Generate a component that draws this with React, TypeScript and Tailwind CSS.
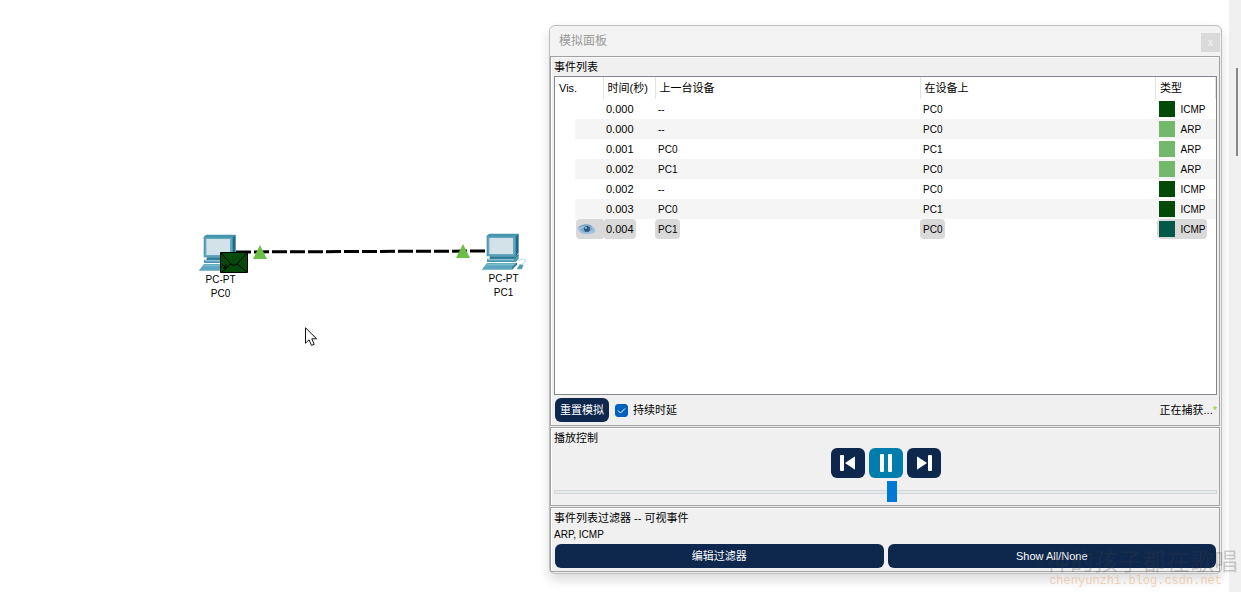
import { useState, type ReactNode } from 'react'

type Packet = {
  time: string
  last: string
  at: string
  type: 'ICMP' | 'ARP'
  active?: boolean
}

const packets: Packet[] = [
  { time: '0.000', last: '--', at: 'PC0', type: 'ICMP' },
  { time: '0.000', last: '--', at: 'PC0', type: 'ARP' },
  { time: '0.001', last: 'PC0', at: 'PC1', type: 'ARP' },
  { time: '0.002', last: 'PC1', at: 'PC0', type: 'ARP' },
  { time: '0.002', last: '--', at: 'PC0', type: 'ICMP' },
  { time: '0.003', last: 'PC0', at: 'PC1', type: 'ICMP' },
  { time: '0.004', last: 'PC1', at: 'PC0', type: 'ICMP', active: true },
]

function swatchColor(packet: Packet) {
  if (packet.active) return 'bg-[#045847]'
  return packet.type === 'ICMP' ? 'bg-[#034a08]' : 'bg-[#74b86b]'
}

function PcIcon() {
  return (
    <svg width="45" height="37" viewBox="124 40 135 111" aria-hidden="true">
      <path d="M141 48l8-6h88l-7 8v60h-89z" fill="#4594ae" />
      <path d="M229 50l8-8v56l-8 13z" fill="#1f6b87" />
      <path d="M144 51h82v57h-82z" fill="#62a7be" />
      <path d="M149 55h71v48h-71z" fill="#d3e1e9" />
      <path d="M150 110h80l7-9v8l-10 9h-77z" fill="#2d7a96" />
      <path d="M142 117h87l8-9v10l-9 9h-86z" fill="#4a96b0" />
      <path d="M144 118h80v4h-80z" fill="#8cc2d2" />
      <path d="M142 130h90l-15 20h-91z" fill="#5ca7bf" />
      <path d="M144 132h83l-4 5h-83z" fill="#7fbccd" />
      <path d="M217 143l15-15v7l-15 15z" fill="#2d7a96" />
      <path d="M231 149l9-15 12 2-6 13z" fill="#5799ae" />
      <path d="M236 122q14-7 20-1q3 6-8 12" fill="none" stroke="#bcd5dd" strokeWidth="3" />
    </svg>
  )
}

function LinkLight() {
  return (
    <svg width="14" height="14" viewBox="0 0 14 14" aria-hidden="true">
      <path d="M7 0l7 14H0z" fill="#6cbf45" />
    </svg>
  )
}

function EyeIcon() {
  return (
    <svg width="17" height="12" viewBox="0 0 17 12" aria-label="Visible" role="img">
      <path d="M0 4Q7-1 13 2L17 6V9Q10 13 3 10Q0 8 0 4z" fill="#9fc0da" />
      <path d="M2 7Q8 1 15 6Q11 10 6 9z" fill="#7aa7cb" />
      <path d="M1 4Q8 0 14 4" fill="none" stroke="#6f9abd" />
      <circle cx="9" cy="6" r="3" fill="#285880" />
      <circle cx="8" cy="5" r="1" fill="#9ecaea" />
    </svg>
  )
}

function Topology() {
  return (
    <section className="relative flex-[549] text-[10px] leading-[14px] text-black">
      <svg
        className="absolute left-[236px] top-[248px]"
        width="251"
        height="8"
        viewBox="0 0 251 8"
        aria-hidden="true"
      >
        <path d="M0 4L251 3" stroke="#000" strokeWidth="3" strokeDasharray="15 3" />
      </svg>
      <div className="absolute left-[253px] top-[245px]">
        <LinkLight />
      </div>
      <div className="absolute left-[456px] top-[244px]">
        <LinkLight />
      </div>

      <div className="absolute left-[198px] top-[234px] flex flex-col items-center">
        <PcIcon />
        <span className="mt-0.5">PC-PT</span>
        <span>PC0</span>
      </div>
      <div className="absolute left-[481px] top-[233px] flex flex-col items-center">
        <PcIcon />
        <span className="mt-0.5">PC-PT</span>
        <span>PC1</span>
      </div>

      <svg
        className="absolute left-[220px] top-[252px]"
        width="28"
        height="21"
        viewBox="0 0 28 21"
        aria-hidden="true"
      >
        <path d="M.5.5h27v20H.5z" fill="#05490b" stroke="#000" />
        <path d="M1 1l10 11q3 3 6 0L27 1M17 12l10 8M11 12l-9 8" fill="none" stroke="#000" />
        <path d="M2 12l4 4M6 12v4H3" fill="none" stroke="#000" />
      </svg>

      <svg
        className="absolute left-[305px] top-[327px]"
        width="13"
        height="20"
        viewBox="0 0 13 20"
        aria-hidden="true"
      >
        <path
          d="M.5.8v15.4l3.6-3.4 2.4 5.6 2.7-1.1-2.4-5.5h4.8z"
          fill="#fff"
          stroke="#111"
        />
      </svg>
    </section>
  )
}

function Group({ title, children }: { title: string; children: ReactNode }) {
  return (
    <section className="border border-[#a0a0a0] bg-[#f0f0f0] pl-[3px] pr-[2px] pb-[3px] shadow-[inset_1px_1px_0_#fff]">
      <h2 className="mt-px h-[18px] leading-[18px]">{title}</h2>
      {children}
    </section>
  )
}

function EventTable() {
  return (
    <div className="min-h-[319px] border border-[#828790] bg-white">
      <table className="w-full table-fixed border-collapse text-left">
        <colgroup>
          <col className="w-12" />
          <col className="w-[52px]" />
          <col className="w-[265px]" />
          <col />
          <col className="w-[60px]" />
        </colgroup>
        <thead>
          <tr className="h-[22px] *:border-r *:border-[#e5e5e5] *:p-0 *:pl-1 *:font-normal *:whitespace-nowrap">
            <th>Vis.</th>
            <th>时间(秒)</th>
            <th>上一台设备</th>
            <th>在设备上</th>
            <th>类型</th>
          </tr>
        </thead>
        <tbody>
          {packets.map((packet, index) => {
            const stripe = index % 2 === 1 ? 'bg-[#f5f5f5]' : ''
            const mark = packet.active ? 'bg-[#d9d9d9]' : ''
            return (
              <tr key={index} className="h-5 leading-5 *:p-0">
                <td>
                  <div className={`ml-5 h-5 ${stripe}`}>
                    {packet.active && (
                      <div className="ml-px flex h-5 items-center rounded-l-sm bg-[#d9d9d9] pl-[2px]">
                        <EyeIcon />
                      </div>
                    )}
                  </div>
                </td>
                <td className={stripe}>
                  <span className={`block h-5 w-[33px] rounded-sm pl-[3px] ${mark}`}>
                    {packet.time}
                  </span>
                </td>
                <td className={`text-[10px] leading-[22px] ${stripe}`}>
                  <span className={`block h-5 w-[25px] rounded-sm pl-[3px] ${mark}`}>
                    {packet.last}
                  </span>
                </td>
                <td className={`text-[10px] leading-[22px] ${stripe}`}>
                  <span className={`block h-5 w-[25px] rounded-sm pl-[3px] ${mark}`}>
                    {packet.at}
                  </span>
                </td>
                <td className={`text-[10px] leading-[22px] ${stripe}`}>
                  <div className={`ml-px flex h-5 w-[50px] gap-1.5 rounded-sm pl-[2px] ${mark}`}>
                    <span className={`mt-0.5 size-4 ${swatchColor(packet)}`} />
                    {packet.type}
                  </div>
                </td>
              </tr>
            )
          })}
        </tbody>
      </table>
    </div>
  )
}

function PlayControls() {
  const [position, setPosition] = useState(51)
  const base = 'flex h-[30px] w-[34px] items-center justify-center rounded-md'

  return (
    <>
      <div className="mt-px flex justify-center gap-1">
        <button type="button" aria-label="后退" className={`${base} bg-[#0d274d]`}>
          <svg width="16" height="18" viewBox="0 0 16 18" fill="#fff">
            <rect x="0" y="1" width="4" height="16" rx="1" />
            <path d="M15 3v12q0 1-1 0L5 9l9-6q1-1 1 0z" />
          </svg>
        </button>
        <button type="button" aria-label="暂停" className={`${base} bg-[#007cad]`}>
          <svg width="14" height="18" viewBox="0 0 14 18" fill="#fff">
            <rect x="1" y="0" width="4" height="18" rx="1" />
            <rect x="9" y="0" width="4" height="18" rx="1" />
          </svg>
        </button>
        <button type="button" aria-label="前进" className={`${base} bg-[#0d274d]`}>
          <svg width="16" height="18" viewBox="0 0 16 18" fill="#fff">
            <path d="M1 3v12q0 1 1 0l9-6-9-6q-1-1-1 0z" />
            <rect x="12" y="1" width="4" height="16" rx="1" />
          </svg>
        </button>
      </div>
      <input
        type="range"
        aria-label="播放速度"
        value={position}
        onChange={(e) => setPosition(Number(e.target.value))}
        className="mt-[3px] block h-[21px] w-full appearance-none bg-transparent [&::-webkit-slider-runnable-track]:h-1 [&::-webkit-slider-runnable-track]:border [&::-webkit-slider-runnable-track]:border-[#d3d7d7] [&::-webkit-slider-runnable-track]:bg-[#e7eaea] [&::-webkit-slider-thumb]:-mt-[10px] [&::-webkit-slider-thumb]:h-[21px] [&::-webkit-slider-thumb]:w-[10px] [&::-webkit-slider-thumb]:appearance-none [&::-webkit-slider-thumb]:bg-[#0078d7]"
      />
    </>
  )
}

function SimulationPanel() {
  const [constantDelay, setConstantDelay] = useState(true)

  return (
    <main className="relative mt-[25px] flex-[670] self-start rounded-md border border-[#bdbdbd] bg-[#f0f0f0] pr-px pb-px shadow-[0_6px_12px_rgba(0,0,0,0.14)]">
      <header className="flex h-[30px] items-start justify-between rounded-t-md bg-[#f3f3f3] pl-[9px]">
        <h1 className="text-xs leading-[30px] text-[#999]">模拟面板</h1>
        <button
          type="button"
          aria-label="关闭"
          className="mt-[7px] size-[19px] bg-[#dadada] text-[10px] leading-[18px] text-[#f7f7f7]"
        >
          x
        </button>
      </header>

      <div className="flex flex-col gap-px">
        <Group title="事件列表">
          <EventTable />
          <div className="mt-[3px] ml-px flex h-6 items-center">
            <button type="button" className="h-6 w-[54px] rounded-md bg-[#0d274d] text-white">
              重置模拟
            </button>
            <label className="ml-1.5 flex items-center gap-[5px]">
              <span className="grid size-[13px] place-items-center">
                <input
                  type="checkbox"
                  checked={constantDelay}
                  onChange={(e) => setConstantDelay(e.target.checked)}
                  className="col-start-1 row-start-1 size-[13px] appearance-none rounded-[3px] border border-[#005fb8] checked:bg-[#0062bd]"
                />
                {constantDelay && (
                  <svg
                    className="pointer-events-none col-start-1 row-start-1"
                    width="9"
                    height="9"
                    viewBox="0 0 9 9"
                    aria-hidden="true"
                  >
                    <path d="M1 4.5L3.5 7 8 2.500" fill="none" stroke="#fff" />
                  </svg>
                )}
              </span>
              持续时延
            </label>
            <span className="ml-auto">
              正在捕获...<span className="text-[#7ad322]">*</span>
            </span>
          </div>
        </Group>

        <Group title="播放控制">
          <PlayControls />
        </Group>

        <Group title="事件列表过滤器 -- 可视事件">
          <p className="pt-px text-[10px] leading-[14px]">ARP, ICMP</p>
          <div className="mx-px mt-0.5 grid grid-cols-2 gap-1">
            <button type="button" className="h-6 rounded-md bg-[#0d274d] text-white">
              编辑过滤器
            </button>
            <button type="button" className="h-6 rounded-md bg-[#0d274d] text-white">
              Show All/None
            </button>
          </div>
        </Group>
      </div>
    </main>
  )
}

export default function App() {
  return (
    <div className="relative flex min-h-screen overflow-hidden bg-white font-['Liberation_Sans','Noto_Sans_CJK_SC',sans-serif] text-[11px] text-black">
      <Topology />
      <SimulationPanel />
      <aside className="ml-[7px] w-3 bg-[#f0f0f0] pt-[68px] pl-[7px]">
        <div className="h-[88px] w-[2px] bg-[#868686]" />
      </aside>

      <div className="pointer-events-none absolute right-[3px] bottom-[4px] text-right whitespace-nowrap">
        <p className="flex items-center justify-end text-2xl leading-[24px] text-[#404040]/25">
          <span className="text-[11px]">@</span>
          <span>神的孩子都在歌唱</span>
        </p>
        <p className="mr-4 font-['Liberation_Mono',monospace] text-xs leading-[14px] text-[#e8a060]/45">
          chenyunzhi.blog.csdn.net
        </p>
      </div>
    </div>
  )
}
